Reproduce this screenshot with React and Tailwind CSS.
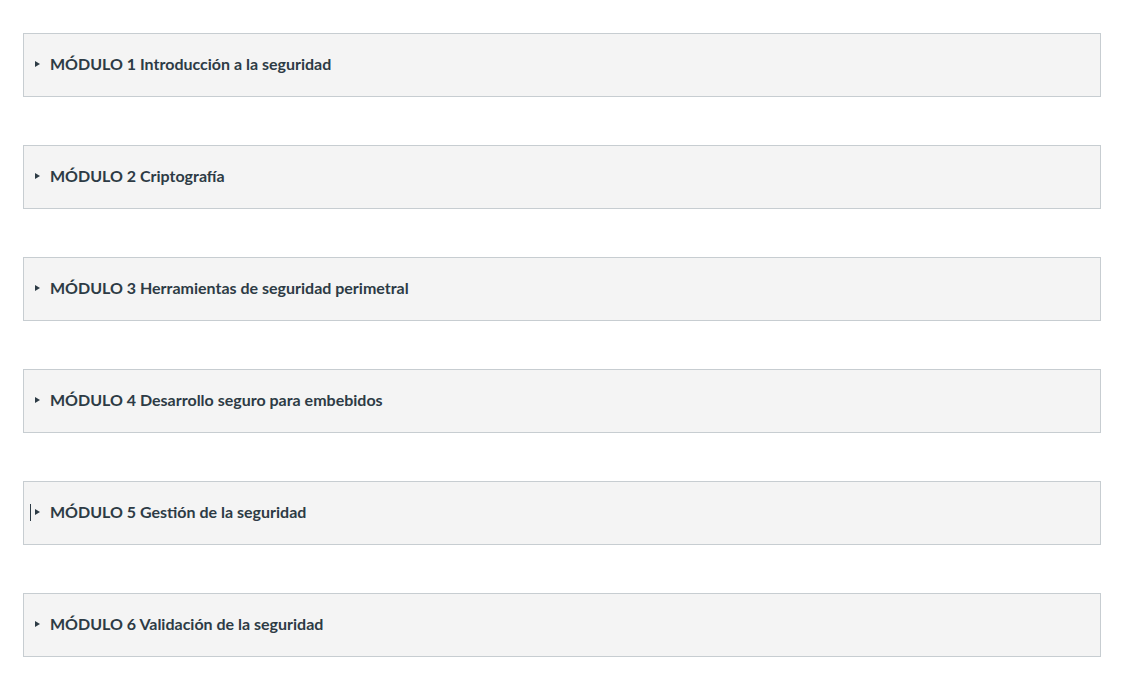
import React from "react";

const modules = [
  "MÓDULO 1 Introducción a la seguridad",
  "MÓDULO 2 Criptografía",
  "MÓDULO 3 Herramientas de seguridad perimetral",
  "MÓDULO 4 Desarrollo seguro para embebidos",
  "MÓDULO 5 Gestión de la seguridad",
  "MÓDULO 6 Validación de la seguridad",
];

export default function App() {
  return (
    <div className="min-h-[690px] bg-white pl-[23px] pt-[33px] flex flex-col gap-[48px]" style={{ fontFamily: "Lato, 'Liberation Sans', sans-serif" }}>
      {modules.map((m, i) => (
        <div key={i} className="w-[1078px] h-[64px] border border-[#c7cdd1] bg-[#f4f4f4] flex items-center relative pb-[2px]">
          {i === 4 && <span className="absolute left-[6px] top-[22px] w-px h-[17px] bg-[#2d3b45]" />}
          <svg width="5" height="6" viewBox="0 0 5 6" className="ml-[11px] mr-[10px]">
            <path d="M0 0 L5 3 L0 6 Z" fill="#2d3b45" />
          </svg>
          <span className="text-[16px] font-bold text-[#2d3b45] leading-none">{m}</span>
        </div>
      ))}
    </div>
  );
}
